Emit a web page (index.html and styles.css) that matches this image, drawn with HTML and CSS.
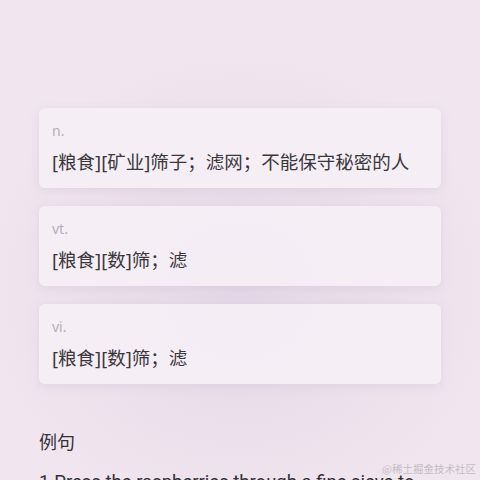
FILE: index.html
```html
<!DOCTYPE html>
<html lang="zh-CN">
<head>
    <meta charset="UTF-8">
    <meta name="viewport" content="width=device-width, initial-scale=1.0">
    <title>sieve</title>
    <link rel="stylesheet" href="styles.css">
</head>
<body>
<div class="page">
    <div class="meanings">
        <div class="sense">
            <div class="pos">n.</div>
            <div class="def">[粮食][矿业]筛子；滤网；不能保守秘密的人</div>
        </div>
        <div class="sense">
            <div class="pos">vt.</div>
            <div class="def">[粮食][数]筛；滤</div>
        </div>
        <div class="sense">
            <div class="pos">vi.</div>
            <div class="def">[粮食][数]筛；滤</div>
        </div>
    </div>

    <h3 class="section-title">例句</h3>
    <p class="example">1.Press the raspberries through a fine sieve to</p>
</div>
<div class="mark">@稀土掘金技术社区</div>
</body>
</html>
```

FILE: styles.css
```css
html, body {
    height: 100%;
}

body {
    margin: 0;
    overflow: hidden;
    font-family: "Noto Sans", "Noto Sans CJK SC", sans-serif;
    color: #333036;
    background-color: #f1e6ef;
    background-image: radial-gradient(ellipse 260px 240px at 240px 290px, rgba(222, 208, 226, 0.7), rgba(241, 230, 239, 0));
}

.page {
    padding: 108px 39px 0;
}

.meanings {
    display: flex;
    flex-direction: column;
    gap: 18px;
}

.sense {
    height: 80px;
    box-sizing: border-box;
    padding: 13px 13px 0;
    background-color: rgba(245, 239, 245, 0.92);
    border-radius: 6px;
    box-shadow: 0 2px 10px rgba(200, 180, 205, 0.35);
}

.pos {
    font-size: 14px;
    line-height: 20px;
    color: #b4afb6;
}

.def {
    margin-top: 8px;
    font-size: 18.5px;
    line-height: 26px;
    color: #3a373d;
}

.section-title {
    margin: 45px 0 0;
    font-size: 18px;
    font-weight: normal;
    line-height: 26px;
    color: #333036;
}

.example {
    margin: 13px 0 0;
    font-family: Roboto, "Noto Sans CJK SC", sans-serif;
    font-size: 18.5px;
    line-height: 28px;
    color: #333036;
    white-space: nowrap;
}

.mark {
    position: absolute;
    right: 4px;
    bottom: 4px;
    font-size: 10.5px;
    color: #c4bcc4;
    font-family: "Noto Sans CJK SC", serif;
}
```
